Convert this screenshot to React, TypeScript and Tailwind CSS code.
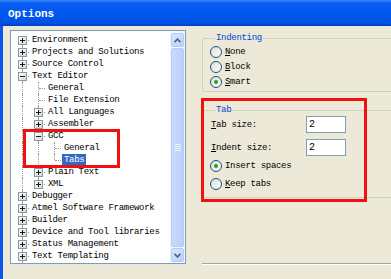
import React from 'react';

type Row = {
  t: string;
  level: number;
  exp?: '+' | '-';
  anc: boolean[];
  first?: boolean;
  last?: boolean;
  sel?: boolean;
};

const rows: Row[] = [
  { t: 'Environment', level: 0, exp: '+', anc: [], first: true },
  { t: 'Projects and Solutions', level: 0, exp: '+', anc: [] },
  { t: 'Source Control', level: 0, exp: '+', anc: [] },
  { t: 'Text Editor', level: 0, exp: '-', anc: [] },
  { t: 'General', level: 1, anc: [true] },
  { t: 'File Extension', level: 1, anc: [true] },
  { t: 'All Languages', level: 1, exp: '+', anc: [true] },
  { t: 'Assembler', level: 1, exp: '+', anc: [true] },
  { t: 'GCC', level: 1, exp: '-', anc: [true] },
  { t: 'General', level: 2, anc: [true, true] },
  { t: 'Tabs', level: 2, anc: [true, true], last: true, sel: true },
  { t: 'Plain Text', level: 1, exp: '+', anc: [true] },
  { t: 'XML', level: 1, exp: '+', anc: [true], last: true },
  { t: 'Debugger', level: 0, exp: '+', anc: [] },
  { t: 'Atmel Software Framework', level: 0, exp: '+', anc: [] },
  { t: 'Builder', level: 0, exp: '+', anc: [] },
  { t: 'Device and Tool libraries', level: 0, exp: '+', anc: [] },
  { t: 'Status Management', level: 0, exp: '+', anc: [] },
  { t: 'Text Templating', level: 0, exp: '+', anc: [] },
  { t: 'Toolchain', level: 0, exp: '+', anc: [] },
];

function PassCell({ on }: { on: boolean }) {
  return (
    <div className="relative w-[16px] h-[12px] shrink-0">
      {on && <div className="absolute left-[8px] top-0 bottom-0 border-l border-dotted border-[#9A9A9A]" />}
    </div>
  );
}

function NodeCell({ r }: { r: Row }) {
  return (
    <div className="relative w-[16px] h-[12px] shrink-0">
      <div
        className={
          'absolute left-[8px] border-l border-dotted border-[#9A9A9A] ' +
          (r.first ? 'top-[6px] ' : 'top-0 ') +
          (r.last ? 'h-[6px]' : 'bottom-0')
        }
      />
      <div className="absolute left-[9px] right-[1px] top-[6px] border-t border-dotted border-[#9A9A9A]" />
      {r.exp && (
        <div className="absolute left-[4px] top-[2px] w-[9px] h-[9px] border border-[#8C9AA8] bg-[linear-gradient(135deg,#ffffff,#d8d8d0)] flex items-center justify-center">
          <div className="relative w-[5px] h-[5px]">
            <div className="absolute left-0 right-0 top-[2px] h-[1px] bg-[#1a1a1a]" />
            {r.exp === '+' && <div className="absolute top-0 bottom-0 left-[2px] w-[1px] bg-[#1a1a1a]" />}
          </div>
        </div>
      )}
    </div>
  );
}

function TreeRow({ r }: { r: Row }) {
  return (
    <div className="flex h-[12px] items-center">
      {r.anc.map((a, i) => (
        <PassCell key={i} on={a} />
      ))}
      <NodeCell r={r} />
      <span
        className={
          'px-[2px] leading-[12px] h-[12px] whitespace-nowrap ' +
          (r.sel ? 'bg-[#316AC5] text-white' : 'text-black')
        }
      >
        {r.t}
      </span>
    </div>
  );
}

function Radio({ checked }: { checked?: boolean }) {
  return (
    <div className="w-[12px] h-[12px] rounded-full border border-[#1C5180] bg-[linear-gradient(135deg,#dcdcd7,#ffffff)] flex items-center justify-center shrink-0">
      {checked && <div className="w-[4px] h-[4px] rounded-full bg-[#21A121]" />}
    </div>
  );
}

function RadioRow({ checked, children, cls }: { checked?: boolean; children: React.ReactNode; cls: string }) {
  return (
    <div className={'flex items-center gap-[3px] ' + cls}>
      <Radio checked={checked} />
      <span className="leading-[12px] whitespace-nowrap">{children}</span>
    </div>
  );
}

function Arrow({ up }: { up?: boolean }) {
  return (
    <svg width="7" height="5" viewBox="0 0 7 5">
      <path d={up ? 'M0.5 4.2 L3.5 1.2 L6.5 4.2' : 'M0.5 0.8 L3.5 3.8 L6.5 0.8'} fill="none" stroke="#4D6185" strokeWidth="1.6" />
    </svg>
  );
}

export default function App() {
  return (
    <div className="relative w-[391px] h-[279px] overflow-hidden bg-[#ECE9D8] flex flex-col font-['Liberation_Mono','DejaVu_Sans_Mono',monospace] text-[9px] tracking-[-0.3px] text-black">
      {/* Title bar */}
      <div className="h-[26px] shrink-0 flex items-center pl-[8px] pt-[3px] bg-[linear-gradient(to_bottom,#3d8cf8_0px,#0a5df2_3px,#0058ee_50%,#0052e4_88%,#003fc8_100%)]">
        <span className="text-white font-bold text-[11px] tracking-[0px]">Options</span>
      </div>

      {/* Body */}
      <div className="flex-1 flex border-l-[3px] border-[#0B57EA]">
        {/* Tree panel */}
        <div className="ml-[7px] mt-[4px] w-[176px] h-[234px] border border-[#7F9DB9] bg-white flex shrink-0">
          <div className="flex-1 overflow-hidden pt-[3px] pl-[3px]">
            {rows.map((r, i) => (
              <TreeRow key={i} r={r} />
            ))}
          </div>
          {/* Scrollbar */}
          <div className="w-[15px] bg-[#F3F6FD] flex flex-col">
            <div className="mt-[2px] h-[14px] mx-[1px] rounded-[2px] border border-[#B7CAF5] bg-[linear-gradient(135deg,#dbe6fe,#bcd0fa)] flex items-center justify-center">
              <Arrow up />
            </div>
            <div className="flex-1 mx-[1px] my-[1px] rounded-[2px] border border-[#B7CAF5] bg-[linear-gradient(to_right,#c9d8fd,#bccffb)] flex items-center justify-center">
              <div className="flex flex-col gap-[1px]">
                <div className="w-[6px] h-[1px] bg-[#EEF3FE]" />
                <div className="w-[6px] h-[1px] bg-[#EEF3FE]" />
                <div className="w-[6px] h-[1px] bg-[#EEF3FE]" />
                <div className="w-[6px] h-[1px] bg-[#EEF3FE]" />
              </div>
            </div>
            <div className="mb-[1px] h-[14px] mx-[1px] rounded-[2px] border border-[#B7CAF5] bg-[linear-gradient(135deg,#dbe6fe,#bcd0fa)] flex items-center justify-center">
              <Arrow />
            </div>
          </div>
        </div>

        {/* Right column */}
        <div className="ml-[16px] w-[200px] shrink-0 flex flex-col">
          <fieldset className="mt-[6px] border border-[#D0D0BF] rounded-[3px] pl-[7px] pb-[2px]">
            <legend className="ml-[5px] px-[1px] text-[#0046D5] leading-[12px]">Indenting</legend>
            <RadioRow cls="h-[15px]">
              <span className="underline">N</span>one
            </RadioRow>
            <RadioRow cls="h-[15px]">
              <span className="underline">B</span>lock
            </RadioRow>
            <RadioRow cls="h-[15px]" checked>
              <span className="underline">S</span>mart
            </RadioRow>
          </fieldset>

          <fieldset className="mt-[12px] border border-[#D0D0BF] rounded-[3px] pl-[7px] pb-[5px]">
            <legend className="ml-[5px] px-[1px] text-[#0046D5] leading-[12px]">Tab</legend>
            <div className="flex items-center h-[17px]">
              <span className="w-[96px] pl-[1px] leading-[12px]">
                <span className="underline">T</span>ab size:
              </span>
              <div className="w-[40px] h-[17px] border border-[#7F9DB9] bg-white flex items-center px-[2px] text-[10px]">2</div>
            </div>
            <div className="mt-[6px] flex items-center h-[17px]">
              <span className="w-[96px] pl-[1px] leading-[12px]">
                <span className="underline">I</span>ndent size:
              </span>
              <div className="w-[40px] h-[17px] border border-[#7F9DB9] bg-white flex items-center px-[2px] text-[10px]">2</div>
            </div>
            <RadioRow cls="mt-[2px] h-[16px]" checked>
              Insert spaces
            </RadioRow>
            <RadioRow cls="mt-[2px] h-[16px]">
              <span className="underline">K</span>eep tabs
            </RadioRow>
          </fieldset>

          <div className="mt-auto mb-[14px] h-[2px] border-t border-[#ACA899] border-b border-b-white" />
        </div>
      </div>

      {/* Annotation boxes */}
      <div className="absolute left-[23px] top-[129px] w-[97px] h-[39px] border-[3px] border-[#F01010]" />
      <div className="absolute left-[201px] top-[98px] w-[166px] h-[104px] border-[3px] border-[#F01010]" />
    </div>
  );
}
